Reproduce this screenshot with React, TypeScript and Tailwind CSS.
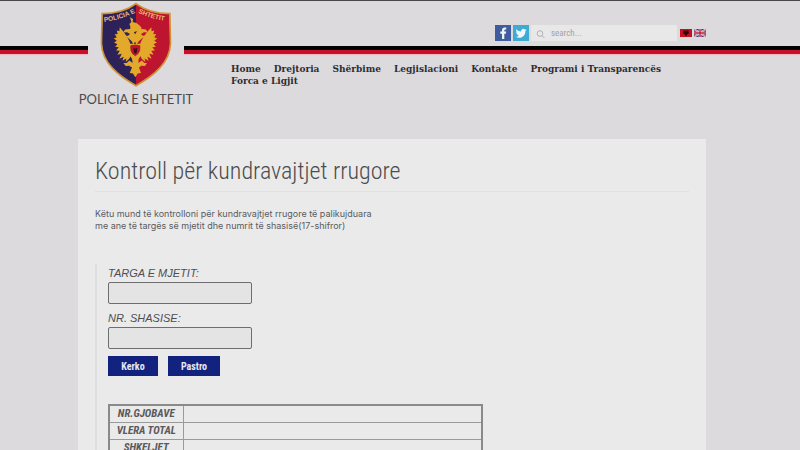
import { useState } from 'react'

const NAV_ITEMS = [
  'Home',
  'Drejtoria',
  'Shërbime',
  'Legjislacioni',
  'Kontakte',
  'Programi i Transparencës',
  'Forca e Ligjit',
]

const RESULT_ROWS = ['NR.GJOBAVE', 'VLERA TOTAL', 'SHKELJET']

const CONDENSED = "font-['Roboto_Condensed','Liberation_Sans_Narrow',sans-serif]"

// Black over red band that runs across the page on both sides of the crest.
function Stripe() {
  return (
    <div className="h-2 border-t-4 border-black bg-[#c8102a] shadow-[0_1px_1px_#f3b9c4]" />
  )
}

function Crest() {
  return (
    <svg viewBox="88 6 216 256" className="h-[85px] w-[72px]" role="img" aria-label="Policia e Shtetit">
      <defs>
        <clipPath id="shield">
          <path d="M196 12 C170 32 130 42 95 42 L93 130 C95 190 143 228 196 257 C249 228 297 190 299 130 L297 42 C262 42 222 32 196 12Z" />
        </clipPath>
        <path id="arc-left" d="M100 66 Q152 59 194 38" />
        <path id="arc-right" d="M202 38 Q245 59 294 64" />
      </defs>
      <g clipPath="url(#shield)">
        <rect x="88" y="6" width="108" height="256" fill="#2d2159" />
        <rect x="196" y="6" width="110" height="256" fill="#bd1530" />
      </g>
      <path
        d="M196 11 C170 31 130 41 94 41 L92 130 C94 190 143 228 196 258 C249 228 298 190 300 130 L298 41 C262 41 222 31 196 11Z"
        fill="none"
        stroke="#cf9433"
        strokeWidth="5"
      />
      <g fill="#eab877" fontFamily="Liberation Sans, sans-serif" fontWeight="700" fontSize="20">
        <text><textPath href="#arc-left">POLICIA E</textPath></text>
        <text><textPath href="#arc-right">SHTETIT</textPath></text>
      </g>
      <g fill="#e3a92b">
        {/* helmet */}
        <path d="M178 52 L187 57 L186 66 Q198 67 207 77 L213 84 L211 92 L198 94 L188 97 L178 93 L179 80 L176 72 L182 66Z" />
        {/* heads */}
        <path d="M193 103 L187 91 L176 87 L163 89 L157 98 L169 97 L178 102 L172 108 L162 108 L174 116 L183 124 L188 134 L193 126 L198 134 L204 124 L214 116 L227 108 L216 108 L211 102 L220 97 L232 98 L226 89 L214 87 L202 91Z" />
        {/* wings */}
        <path d="M181 140 C177 118 160 97 147 82 L146 94 L138 92 L141 103 L132 102 L138 113 L129 115 L138 123 L130 128 L140 133 L133 141 L144 142 L136 152 L147 153 L140 165 L153 162 L146 177 L159 171 L155 183 L167 176 L165 187 L175 178 L182 164Z" />
        <path d="M207 140 C211 118 229 97 242 82 L243 94 L251 92 L248 103 L257 102 L251 113 L260 115 L251 123 L259 128 L249 133 L256 141 L245 142 L253 152 L242 153 L249 165 L236 162 L243 177 L230 171 L234 183 L222 176 L224 187 L214 178 L207 164Z" />
        {/* body, legs and tail */}
        <path d="M178 132 L211 132 L213 164 L204 178 L203 190 L214 182 L221 190 L229 190 L223 199 L212 198 L205 203 L211 220 L201 221 L194 233 L187 221 L177 220 L184 203 L175 198 L165 199 L158 190 L168 190 L176 182 L186 190 L184 178 L175 164Z" />
      </g>
      <path d="M180 138 Q194 133 208 138 L207 153 Q203 163 194 168 Q184 163 181 153Z" fill="#c4122f" stroke="#8c1b1c" strokeWidth="2" />
      <path d="M188 144 L194 147 L200 144 L198 158 L194 162 L190 158Z" fill="#3a1018" />
    </svg>
  )
}

function FacebookIcon() {
  return (
    <svg viewBox="0 0 16 16" className="size-4">
      <rect width="16" height="16" fill="#3f5d9e" />
      <path d="M7 14V8.8H5.3V6.6H7V5.2C7 3.3 8 2.4 9.8 2.4h1.4v2.2h-1c-.6 0-.9.3-.9.9v1.1h1.9l-.3 2.2H9.3V14Z" fill="#f1f3f7" />
    </svg>
  )
}

function TwitterIcon() {
  return (
    <svg viewBox="0 0 16 16" className="size-4">
      <rect width="16" height="16" fill="#3eabd4" />
      <path d="M13.4 4.8c-.4.2-.8.3-1.3.4.5-.3.8-.7 1-1.2-.4.2-.9.4-1.4.5A2.2 2.2 0 0 0 8 6.5C6.1 6.4 4.5 5.5 3.4 4.2c-.6 1-.3 2.3.7 3-.4 0-.7-.1-1-.3 0 1 .7 2 1.8 2.2-.3.1-.7.1-1 0 .3.9 1.1 1.5 2.1 1.6-1 .8-2.1 1.1-3.3 1 4.6 2.8 9.7-.2 9.7-5.5.4-.4.8-.8 1-1.4Z" fill="#f1f7fa" />
    </svg>
  )
}

function AlbanianFlag() {
  return (
    <svg viewBox="0 0 12 8" className="h-2 w-3">
      <rect width="12" height="8" fill="#c4101f" />
      <path d="M6 2.2 5 1.2 3.5 1.5 4.5 2.5 3 2.3 3.5 5 5 5.2 5.2 6.2 6 7.2 6.8 6.2 7 5.2 8.5 5 9 2.3 7.5 2.5 8.5 1.5 7 1.2Z" fill="#2a0508" />
    </svg>
  )
}

function BritishFlag() {
  return (
    <svg viewBox="0 0 12 8" className="h-2 w-3">
      <rect width="12" height="8" fill="#39407f" />
      <path d="M0 0 12 8M12 0 0 8" stroke="#e6e0e8" strokeWidth="1.8" />
      <path d="M0 0 12 8M12 0 0 8" stroke="#c43a50" strokeWidth=".6" />
      <path d="M6 0V8M0 4H12" stroke="#e6e0e8" strokeWidth="2.6" />
      <path d="M6 0V8M0 4H12" stroke="#c4203a" strokeWidth="1.4" />
    </svg>
  )
}

function Header() {
  return (
    <header className="flex border-t border-[#4a484b]">
      <div className="w-[88px] shrink-0 pt-[45px]">
        <Stripe />
      </div>

      <a href="#" className="flex w-24 shrink-0 flex-col items-center pt-px">
        <Crest />
        <span className="mt-1 font-['Lato',sans-serif] text-[13px] leading-4 whitespace-nowrap text-[#4b4a4d]">
          POLICIA E SHTETIT
        </span>
      </a>

      <div className="min-w-0 flex-1">
        <div className="flex h-[45px] items-start justify-end gap-[2px] pt-6 pr-[94px]">
          <a href="#" aria-label="Facebook">
            <FacebookIcon />
          </a>
          <a href="#" aria-label="Twitter">
            <TwitterIcon />
          </a>
          <label className="flex h-4 w-[146px] items-center gap-[6px] bg-[#e9e8e9] px-[5px] pt-px">
            <svg viewBox="0 0 10 10" className="size-[10px]" fill="none" stroke="#aaa9ab">
              <circle cx="4.5" cy="4.5" r="3.2" />
              <path d="M7 7l2.5 2.5" />
            </svg>
            <input
              type="search"
              aria-label="Search"
              placeholder="search..."
              className={`${CONDENSED} w-full min-w-0 bg-transparent text-[9px] outline-none placeholder:text-[#a3a2a4]`}
            />
          </label>
          <div className="flex gap-[2px] pt-1 pl-px">
            <a href="#" aria-label="Shqip">
              <AlbanianFlag />
            </a>
            <a href="#" aria-label="English">
              <BritishFlag />
            </a>
          </div>
        </div>
        <Stripe />
        <nav className="flex flex-wrap gap-x-[13px] pt-[9px] pr-[94px] pl-[47px] font-['DejaVu_Serif',serif] text-[9px] leading-3 font-bold text-[#2f2d30]">
          {NAV_ITEMS.map((item) => (
            <a key={item} href="#">
              {item}
            </a>
          ))}
        </nav>
      </div>
    </header>
  )
}

interface FieldProps {
  id: string
  label: string
  value: string
  onChange: (value: string) => void
}

function Field({ id, label, value, onChange }: FieldProps) {
  return (
    <div className="mb-[5px]">
      <label
        htmlFor={id}
        className="block text-[11px] leading-[18px] text-[#4f4e50] italic"
      >
        {label}
      </label>
      <input
        id={id}
        value={value}
        onChange={(e) => onChange(e.target.value)}
        className="block h-[22px] w-36 rounded-xs border border-[#6e6e6f] bg-[#e4e4e5] px-1 text-[11px]"
      />
    </div>
  )
}

export default function App() {
  const [plate, setPlate] = useState('')
  const [chassis, setChassis] = useState('')

  function handleClear() {
    setPlate('')
    setChassis('')
  }

  return (
    <div className="min-h-screen bg-[#dcdadd] font-['Liberation_Sans',sans-serif]">
      <Header />

      <main className="mt-8 mr-[94px] ml-[78px] min-h-80 bg-[#eaeaea] px-[17px] pt-4">
        <h1
          className={`${CONDENSED} border-b border-[#e0e0e1] pb-1 text-[24px] leading-8 font-light text-[#4d4c4e]`}
        >
          Kontroll për kundravajtjet rrugore
        </h1>

        <p className="mt-4 font-['Inter',sans-serif] text-[9px] leading-3 text-[#5c5b5d]">
          Këtu mund të kontrolloni për kundravajtjet rrugore të palikujduara
          <br />
          me ane të targës së mjetit dhe numrit të shasisë(17-shifror)
        </p>

        <form
          className="mt-8 border-l-2 border-[#dededf] pl-[11px]"
          onSubmit={(e) => e.preventDefault()}
        >
          <Field id="plate" label="TARGA E MJETIT:" value={plate} onChange={setPlate} />
          <Field id="chassis" label="NR. SHASISE:" value={chassis} onChange={setChassis} />

          <div className={`${CONDENSED} mt-[7px] flex gap-[10px] text-[10px] font-bold text-[#e8e9f2]`}>
            <button type="submit" className="h-5 w-[50px] bg-[#12227f]">
              Kerko
            </button>
            <button type="button" onClick={handleClear} className="h-5 w-[52px] bg-[#12227f]">
              Pastro
            </button>
          </div>

          <table className="mt-7 w-[375px] border-collapse border-2 border-[#8a8a8b]">
            <tbody>
              {RESULT_ROWS.map((row) => (
                <tr key={row} className="h-[17px]">
                  <th
                    scope="row"
                    className={`${CONDENSED} w-[74px] border border-[#9a9a9b] p-0 text-[11px] leading-4 font-bold text-[#5a595b] italic`}
                  >
                    {row}
                  </th>
                  <td className="border border-[#9a9a9b] p-0" />
                </tr>
              ))}
            </tbody>
          </table>
        </form>
      </main>
    </div>
  )
}
